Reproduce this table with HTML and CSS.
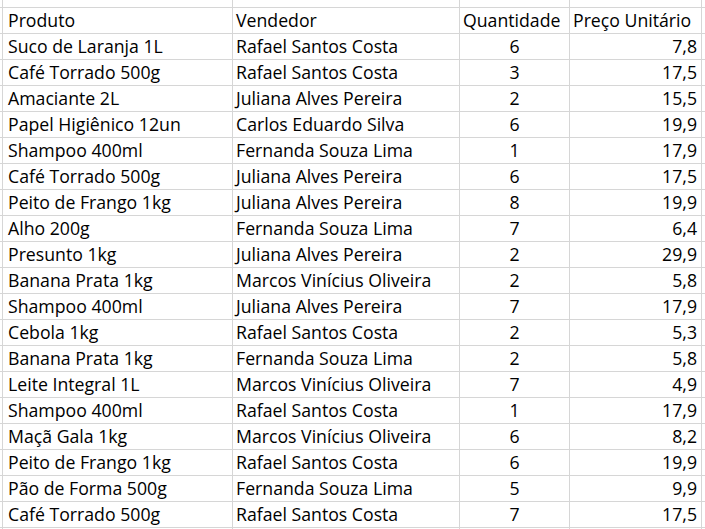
FILE: index.html
```html
<!DOCTYPE html>
<html lang="pt">
<head>
<meta charset="utf-8">
<title>Vendas</title>
<link rel="stylesheet" href="styles.css">
</head>
<body>
<div class="sheet">
  <div></div><div></div><div></div><div></div><div></div><div></div>
  <div></div><div class="c a">Produto</div><div class="c b">Vendedor</div><div class="c q hq">Quantidade</div><div class="c p hp">Preço Unitário</div><div></div>
  <div></div><div class="c a">Suco de Laranja 1L</div><div class="c b">Rafael Santos Costa</div><div class="c q">6</div><div class="c p">7,8</div><div></div>
  <div></div><div class="c a">Café Torrado 500g</div><div class="c b">Rafael Santos Costa</div><div class="c q">3</div><div class="c p">17,5</div><div></div>
  <div></div><div class="c a">Amaciante 2L</div><div class="c b">Juliana Alves Pereira</div><div class="c q">2</div><div class="c p">15,5</div><div></div>
  <div></div><div class="c a">Papel Higiênico 12un</div><div class="c b">Carlos Eduardo Silva</div><div class="c q">6</div><div class="c p">19,9</div><div></div>
  <div></div><div class="c a">Shampoo 400ml</div><div class="c b">Fernanda Souza Lima</div><div class="c q">1</div><div class="c p">17,9</div><div></div>
  <div></div><div class="c a">Café Torrado 500g</div><div class="c b">Juliana Alves Pereira</div><div class="c q">6</div><div class="c p">17,5</div><div></div>
  <div></div><div class="c a">Peito de Frango 1kg</div><div class="c b">Juliana Alves Pereira</div><div class="c q">8</div><div class="c p">19,9</div><div></div>
  <div></div><div class="c a">Alho 200g</div><div class="c b">Fernanda Souza Lima</div><div class="c q">7</div><div class="c p">6,4</div><div></div>
  <div></div><div class="c a">Presunto 1kg</div><div class="c b">Juliana Alves Pereira</div><div class="c q">2</div><div class="c p">29,9</div><div></div>
  <div></div><div class="c a">Banana Prata 1kg</div><div class="c b">Marcos Vinícius Oliveira</div><div class="c q">2</div><div class="c p">5,8</div><div></div>
  <div></div><div class="c a">Shampoo 400ml</div><div class="c b">Juliana Alves Pereira</div><div class="c q">7</div><div class="c p">17,9</div><div></div>
  <div></div><div class="c a">Cebola 1kg</div><div class="c b">Rafael Santos Costa</div><div class="c q">2</div><div class="c p">5,3</div><div></div>
  <div></div><div class="c a">Banana Prata 1kg</div><div class="c b">Fernanda Souza Lima</div><div class="c q">2</div><div class="c p">5,8</div><div></div>
  <div></div><div class="c a">Leite Integral 1L</div><div class="c b">Marcos Vinícius Oliveira</div><div class="c q">7</div><div class="c p">4,9</div><div></div>
  <div></div><div class="c a">Shampoo 400ml</div><div class="c b">Rafael Santos Costa</div><div class="c q">1</div><div class="c p">17,9</div><div></div>
  <div></div><div class="c a">Maçã Gala 1kg</div><div class="c b">Marcos Vinícius Oliveira</div><div class="c q">6</div><div class="c p">8,2</div><div></div>
  <div></div><div class="c a">Peito de Frango 1kg</div><div class="c b">Rafael Santos Costa</div><div class="c q">6</div><div class="c p">19,9</div><div></div>
  <div></div><div class="c a">Pão de Forma 500g</div><div class="c b">Fernanda Souza Lima</div><div class="c q">5</div><div class="c p">9,9</div><div></div>
  <div></div><div class="c a">Café Torrado 500g</div><div class="c b">Rafael Santos Costa</div><div class="c q">7</div><div class="c p">17,5</div><div></div>
  <div></div><div></div><div></div><div></div><div></div><div></div>
</div>
</body>
</html>
```
FILE: styles.css
```css
html, body {
  margin: 0;
  padding: 0;
  background: #ffffff;
  overflow: hidden;
}
.sheet {
  display: grid;
  grid-template-columns: 2px 229px 226px 109px 131px 3px;
  grid-template-rows: 7px repeat(20, 25px) 1px;
  gap: 1px;
  background: #d6d6d6;
  width: 705px;
  height: 529px;
  font-family: "Open Sans", "Noto Sans", sans-serif;
  font-size: 17.7px;
  color: #000000;
}
.sheet > div {
  background: #ffffff;
  overflow: visible;
  white-space: nowrap;
}
.c {
  line-height: 24px;
}
.a { padding-left: 5px; }
.b { padding-left: 3px; }
.q { text-align: center; }
.hq { text-align: left; padding-left: 3px; }
.p { text-align: right; padding-right: 4px; }
.hp { text-align: left; padding-left: 3px; }
```
